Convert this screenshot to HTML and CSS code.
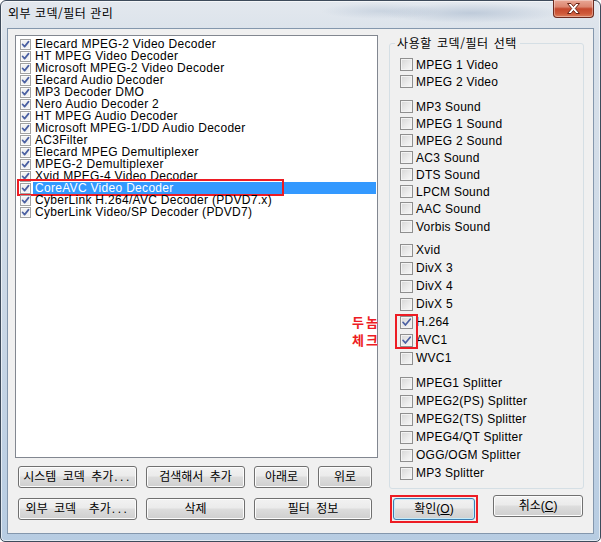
FILE: index.html
```html
<!DOCTYPE html>
<html lang="ko">
<head>
<meta charset="utf-8">
<title>외부 코덱/필터 관리</title>
<link rel="stylesheet" href="styles.css">
</head>
<body>
<div class="window">
  <div class="titlebar">
    <span class="title">외부 코덱/필터 관리</span>
    <div class="close">
      <svg width="15" height="11" viewBox="0 0 15 11"><path d="M1.5 0.5h3.5l2.5 3 2.5-3h3.5l-4.2 5 4.2 5h-3.5l-2.5-3-2.5 3h-3.5l4.2-5z" fill="#fff" stroke="#6a2416" stroke-width="1"/></svg>
    </div>
  </div>
  <div class="client">
    <div class="left">
      <div class="listbox">
        <div class="item"><span class="cb sm"><svg viewBox="0 0 9 9"><path d="M1.5 4.3 3.6 6.6 7.6 1.6"/></svg></span><span class="label">Elecard MPEG-2 Video Decoder</span></div>
        <div class="item"><span class="cb sm"><svg viewBox="0 0 9 9"><path d="M1.5 4.3 3.6 6.6 7.6 1.6"/></svg></span><span class="label">HT MPEG Video Decoder</span></div>
        <div class="item"><span class="cb sm"><svg viewBox="0 0 9 9"><path d="M1.5 4.3 3.6 6.6 7.6 1.6"/></svg></span><span class="label">Microsoft MPEG-2 Video Decoder</span></div>
        <div class="item"><span class="cb sm"><svg viewBox="0 0 9 9"><path d="M1.5 4.3 3.6 6.6 7.6 1.6"/></svg></span><span class="label">Elecard Audio Decoder</span></div>
        <div class="item"><span class="cb sm"><svg viewBox="0 0 9 9"><path d="M1.5 4.3 3.6 6.6 7.6 1.6"/></svg></span><span class="label">MP3 Decoder DMO</span></div>
        <div class="item"><span class="cb sm"><svg viewBox="0 0 9 9"><path d="M1.5 4.3 3.6 6.6 7.6 1.6"/></svg></span><span class="label">Nero Audio Decoder 2</span></div>
        <div class="item"><span class="cb sm"><svg viewBox="0 0 9 9"><path d="M1.5 4.3 3.6 6.6 7.6 1.6"/></svg></span><span class="label">HT MPEG Audio Decoder</span></div>
        <div class="item"><span class="cb sm"><svg viewBox="0 0 9 9"><path d="M1.5 4.3 3.6 6.6 7.6 1.6"/></svg></span><span class="label">Microsoft MPEG-1/DD Audio Decoder</span></div>
        <div class="item"><span class="cb sm"><svg viewBox="0 0 9 9"><path d="M1.5 4.3 3.6 6.6 7.6 1.6"/></svg></span><span class="label">AC3Filter</span></div>
        <div class="item"><span class="cb sm"><svg viewBox="0 0 9 9"><path d="M1.5 4.3 3.6 6.6 7.6 1.6"/></svg></span><span class="label">Elecard MPEG Demultiplexer</span></div>
        <div class="item"><span class="cb sm"><svg viewBox="0 0 9 9"><path d="M1.5 4.3 3.6 6.6 7.6 1.6"/></svg></span><span class="label">MPEG-2 Demultiplexer</span></div>
        <div class="item"><span class="cb sm"><svg viewBox="0 0 9 9"><path d="M1.5 4.3 3.6 6.6 7.6 1.6"/></svg></span><span class="label">Xvid MPEG-4 Video Decoder</span></div>
        <div class="item sel"><span class="cb sm"><svg viewBox="0 0 9 9"><path d="M1.5 4.3 3.6 6.6 7.6 1.6"/></svg></span><span class="label">CoreAVC Video Decoder</span><span class="redrect"></span></div>
        <div class="item"><span class="cb sm"><svg viewBox="0 0 9 9"><path d="M1.5 4.3 3.6 6.6 7.6 1.6"/></svg></span><span class="label">CyberLink H.264/AVC Decoder (PDVD7.x)</span></div>
        <div class="item"><span class="cb sm"><svg viewBox="0 0 9 9"><path d="M1.5 4.3 3.6 6.6 7.6 1.6"/></svg></span><span class="label">CyberLink Video/SP Decoder (PDVD7)</span></div>
      </div>
      <div class="btnrow row1">
        <button class="btn w119">시스템 코덱 추가<span class="dots">...</span></button>
        <button class="btn w99">검색해서 추가</button>
        <button class="btn w55">아래로</button>
        <button class="btn w54">위로</button>
      </div>
      <div class="btnrow row2">
        <button class="btn w119">외부 코덱&nbsp; 추가<span class="dots">...</span></button>
        <button class="btn w99">삭제</button>
        <button class="btn w118">필터 정보</button>
      </div>
    </div>
    <div class="right">
      <fieldset class="group">
        <legend>사용할 코덱/필터 선택</legend>
        <div class="opts">
          <div class="sec secA">
            <div class="opt"><span class="cb lg"></span>MPEG 1 Video</div>
            <div class="opt"><span class="cb lg"></span>MPEG 2 Video</div>
          </div>
          <div class="sec secB">
            <div class="opt"><span class="cb lg"></span>MP3 Sound</div>
            <div class="opt"><span class="cb lg"></span>MPEG 1 Sound</div>
            <div class="opt"><span class="cb lg"></span>MPEG 2 Sound</div>
            <div class="opt"><span class="cb lg"></span>AC3 Sound</div>
            <div class="opt"><span class="cb lg"></span>DTS Sound</div>
            <div class="opt"><span class="cb lg"></span>LPCM Sound</div>
            <div class="opt"><span class="cb lg"></span>AAC Sound</div>
            <div class="opt last"><span class="cb lg"></span>Vorbis Sound</div>
          </div>
          <div class="sec secC">
            <div class="opt"><span class="cb lg"></span>Xvid</div>
            <div class="opt"><span class="cb lg"></span>DivX 3</div>
            <div class="opt"><span class="cb lg"></span>DivX 4</div>
            <div class="opt"><span class="cb lg"></span>DivX 5</div>
            <div class="opt"><span class="cb lg"><svg viewBox="0 0 11 11"><path d="M2 5.3 4.4 8 9.2 2.2"/></svg></span>H.264</div>
            <div class="opt"><span class="cb lg"><svg viewBox="0 0 11 11"><path d="M2 5.3 4.4 8 9.2 2.2"/></svg></span>AVC1</div>
            <div class="opt"><span class="cb lg"></span>WVC1</div>
          </div>
          <div class="sec secD">
            <div class="opt"><span class="cb lg"></span>MPEG1 Splitter</div>
            <div class="opt"><span class="cb lg"></span>MPEG2(PS) Splitter</div>
            <div class="opt"><span class="cb lg"></span>MPEG2(TS) Splitter</div>
            <div class="opt"><span class="cb lg"></span>MPEG4/QT Splitter</div>
            <div class="opt"><span class="cb lg"></span>OGG/OGM Splitter</div>
            <div class="opt"><span class="cb lg"></span>MP3 Splitter</div>
          </div>
        </div>
      </fieldset>
      <div class="rbtns">
        <span class="okwrap"><button class="btn ok">확인(<u>O</u>)</button></span>
        <button class="btn cancel">취소(<u>C</u>)</button>
      </div>
    </div>
    <div class="note">두놈<br>체크</div>
    <div class="markbox"></div>
  </div>
</div>
</body>
</html>
```

FILE: styles.css
```css
* { box-sizing: border-box; }

body {
  margin: 0;
  width: 601px;
  height: 542px;
  overflow: hidden;
  background: #ffffff;
  font-family: "Liberation Sans", "Noto Sans CJK KR", sans-serif;
  font-size: 12px;
  color: #000;
}

.window {
  width: 601px;
  height: 542px;
  border: 1px solid #3e4b5b;
  border-radius: 6px 6px 5px 5px;
  background:
    radial-gradient(ellipse 90px 10px at 470px 12px, rgba(150,170,195,.45), rgba(150,170,195,0)),
    radial-gradient(ellipse 60px 8px at 380px 10px, rgba(160,178,200,.35), rgba(160,178,200,0)),
    linear-gradient(180deg, #e3e8ee 0px, #d9e1ea 40px, #cbd8e6 300px, #b7cce2 542px);
  box-shadow: inset 0 0 0 1px rgba(255,255,255,.6);
  display: flex;
  flex-direction: column;
}

.titlebar {
  height: 27px;
  display: flex;
  align-items: flex-start;
  padding: 0 6px 0 7px;
}

.title {
  font-family: "Noto Sans CJK KR", sans-serif;
  font-size: 12px;
  line-height: 14px;
  letter-spacing: 0.5px;
  margin-top: 5px;
  color: #000;
}

.close {
  margin-left: auto;
  margin-top: -1px;
  width: 41px;
  height: 18px;
  border: 1px solid #6d2a1e;
  border-top: none;
  border-radius: 0 0 4px 4px;
  background: linear-gradient(180deg, #e9a795 0%, #dc8670 40%, #c5482d 52%, #cf5a3a 80%, #dc7e5b 100%);
  box-shadow: inset 0 0 0 1px rgba(255,255,255,.35);
  display: flex;
  align-items: center;
  justify-content: center;
}

.close svg { display: block; }

.client {
  flex: 1;
  margin: 0 6px 7px 6px;
  border: 1px solid #8497ad;
  background: #f0f0f0;
  padding: 6px 0 0 7px;
  display: flex;
  gap: 11px;
  position: relative;
}

.left {
  width: 363px;
  display: flex;
  flex-direction: column;
}

.listbox {
  height: 423px;
  border: 1px solid #828790;
  background: #fff;
  padding: 2px 1px 0 0;
}

.item {
  height: 12px;
  display: flex;
  align-items: flex-start;
  padding-left: 4px;
  position: relative;
}

.cb {
  flex: none;
  border: 1px solid #8f8f8f;
  background: linear-gradient(135deg, #d6d6d6 0%, #ececec 60%, #f8f8f8 100%);
  box-shadow: inset 0 0 0 1px #f3f3f3;
  display: flex;
  align-items: center;
  justify-content: center;
}

.cb svg { display: block; fill: none; stroke: #4b60a2; stroke-width: 1.7; stroke-linecap: round; stroke-linejoin: round; }

.cb.sm {
  width: 11px;
  height: 11px;
  margin-top: 1px;
  border-color: #a2a2a2;
  background: #f1f1f1;
  box-shadow: inset 0 0 0 1px #fafafa;
}
.cb.sm svg { width: 9px; height: 9px; }

.label {
  flex: 1;
  margin-left: 2px;
  padding-left: 2px;
  height: 12px;
  line-height: 12px;
  letter-spacing: 0.3px;
  white-space: nowrap;
}

.item.sel .label {
  background: #3399ff;
  color: #fff;
}

.redrect {
  position: absolute;
  left: 1px;
  top: -3px;
  width: 267px;
  height: 17px;
  border: 2px solid #ed1c24;
}

.btnrow {
  display: flex;
  gap: 9px;
  padding-left: 3px;
}
.row1 { margin-top: 8px; }
.row2 { margin-top: 10px; }

.btn {
  height: 22px;
  padding: 0;
  border: 1px solid #707070;
  border-radius: 3px;
  background: linear-gradient(180deg, #f2f2f2 0%, #ebebeb 45%, #dddddd 50%, #cfcfcf 100%);
  box-shadow: inset 0 0 0 1px #fcfcfc;
  font-family: "Liberation Sans", "Noto Sans CJK KR", sans-serif;
  font-size: 12px;
  line-height: 20px;
  word-spacing: 3px;
  color: #000;
  text-align: center;
  white-space: nowrap;
}

.dots { letter-spacing: 2.5px; margin-left: 1px; }

.w119 { width: 119px; }
.w99 { width: 99px; }
.w55 { width: 55px; }
.w54 { width: 54px; }
.w118 { width: 118px; }

.right {
  width: 195px;
  display: flex;
  flex-direction: column;
}

.group {
  margin: 1px 0 0 0;
  padding: 0;
  height: 453px;
  min-width: 0;
  border: 1px solid #d5dfe5;
  border-radius: 3px;
}

.group legend {
  margin-left: 5px;
  padding: 0 3px 0 2px;
  font-family: "Noto Sans CJK KR", sans-serif;
  font-size: 12px;
  line-height: 14px;
  letter-spacing: 0.6px;
  word-spacing: 1px;
}

.opts { padding: 6px 0 0 10px; }

.opt {
  display: flex;
  align-items: center;
  height: 17px;
  letter-spacing: 0.25px;
  white-space: nowrap;
}

.cb.lg {
  width: 13px;
  height: 13px;
  margin-right: 3px;
}
.cb.lg svg { width: 11px; height: 11px; }

.secB { margin-top: 8px; }
.secB .opt.last { margin-top: 1px; }
.secC { margin-top: 6px; }
.secC .opt { height: 18px; }
.secD { margin-top: 7px; }
.secD .opt { height: 18px; }

.rbtns {
  display: flex;
  gap: 15px;
  margin-top: 6px;
  padding-left: 1px;
}

.okwrap {
  display: flex;
  border: 2px solid #ed1c24;
  padding: 1px;
}

.btn.ok {
  width: 82px;
  border-color: #3c7fb1;
  box-shadow: inset 0 0 0 1px #c5ecfb;
}

.btn.cancel { width: 90px; }

.note {
  position: absolute;
  left: 344px;
  top: 284px;
  color: #ed1c24;
  font-family: "Noto Sans CJK KR", sans-serif;
  font-weight: bold;
  font-size: 13px;
  line-height: 18px;
  letter-spacing: 2px;
}

.markbox {
  position: absolute;
  left: 387px;
  top: 285px;
  width: 23px;
  height: 35px;
  border: 2px solid #ed1c24;
}
```
